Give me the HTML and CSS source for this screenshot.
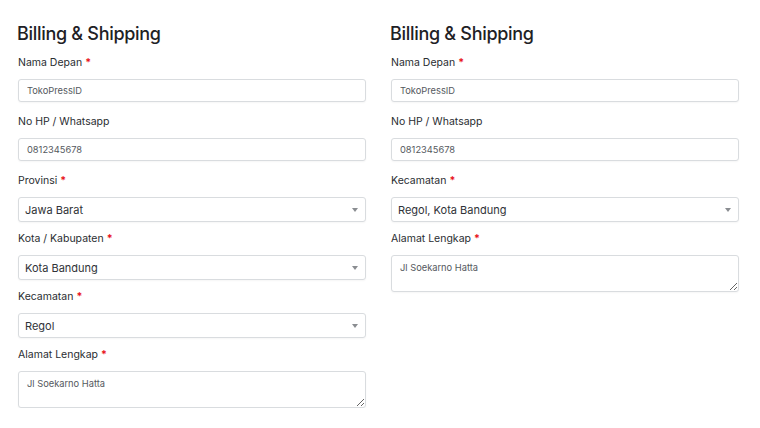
FILE: index.html
```html
<!DOCTYPE html>
<html lang="id">
<head>
<meta charset="utf-8">
<title>Billing &amp; Shipping</title>
<link rel="stylesheet" href="styles.css">
</head>
<body>
<div class="page">
  <section class="form-col">
    <h2 class="title">Billing &amp; Shipping</h2>
    <div class="group">
      <label class="label">Nama Depan <span class="req">*</span></label>
      <input class="field" type="text" value="TokoPressID">
    </div>
    <div class="group">
      <label class="label">No HP / Whatsapp</label>
      <input class="field" type="text" value="0812345678">
    </div>
    <div class="group">
      <label class="label">Provinsi <span class="req">*</span></label>
      <div class="select"><span>Jawa Barat</span><i class="caret"></i></div>
    </div>
    <div class="group">
      <label class="label">Kota / Kabupaten <span class="req">*</span></label>
      <div class="select"><span>Kota Bandung</span><i class="caret"></i></div>
    </div>
    <div class="group">
      <label class="label">Kecamatan <span class="req">*</span></label>
      <div class="select"><span>Regol</span><i class="caret"></i></div>
    </div>
    <div class="group">
      <label class="label">Alamat Lengkap <span class="req">*</span></label>
      <textarea class="area">Jl Soekarno Hatta</textarea>
    </div>
  </section>
  <section class="form-col">
    <h2 class="title">Billing &amp; Shipping</h2>
    <div class="group">
      <label class="label">Nama Depan <span class="req">*</span></label>
      <input class="field" type="text" value="TokoPressID">
    </div>
    <div class="group">
      <label class="label">No HP / Whatsapp</label>
      <input class="field" type="text" value="0812345678">
    </div>
    <div class="group">
      <label class="label">Kecamatan <span class="req">*</span></label>
      <div class="select"><span>Regol, Kota Bandung</span><i class="caret"></i></div>
    </div>
    <div class="group">
      <label class="label">Alamat Lengkap <span class="req">*</span></label>
      <textarea class="area">Jl Soekarno Hatta</textarea>
    </div>
  </section>
</div>
</body>
</html>
```

FILE: styles.css
```css
html, body {
  margin: 0;
  padding: 0;
  background: #ffffff;
}
body {
  font-family: Inter, "Liberation Sans", Arial, sans-serif;
  color: #212529;
}
.page {
  display: flex;
  gap: 25px;
  padding: 22px 0 0 18px;
}
.form-col {
  width: 348px;
  display: flex;
  flex-direction: column;
  gap: 9px;
}
.title {
  margin: 0 0 0 -1px;
  font-size: 18px;
  line-height: 24px;
  font-weight: 500;
  letter-spacing: -0.3px;
  color: #1e2125;
}
.group {
  display: flex;
  flex-direction: column;
  gap: 8px;
}
.label {
  font-size: 10.5px;
  line-height: 16px;
  color: #2a2d31;
}
.req {
  color: #e8141c;
  font-weight: 700;
}
.field, .select, .area {
  box-sizing: border-box;
  width: 100%;
  border: 1px solid #d9dcdf;
  border-radius: 3px;
  background: #fff;
  box-shadow: 0 1px 2px rgba(0,0,0,0.04);
  font-family: Inter, "Liberation Sans", Arial, sans-serif;
  margin: 0;
  outline: none;
}
.field {
  height: 23px;
  margin-bottom: 3px;
  padding: 0 8px;
  font-size: 9.3px;
  color: #55595e;
}
.select {
  height: 25px;
  padding: 0 6px;
  display: flex;
  align-items: center;
  justify-content: space-between;
  font-size: 11px;
  color: #303338;
}
.caret {
  width: 0;
  height: 0;
  border-left: 3px solid transparent;
  border-right: 3px solid transparent;
  border-top: 4px solid #8a8d91;
  margin-right: 1px;
}
.area {
  display: block;
  height: 37px;
  padding: 6px 8px;
  font-size: 9.3px;
  line-height: 12px;
  color: #55595e;
  resize: vertical;
}
```
